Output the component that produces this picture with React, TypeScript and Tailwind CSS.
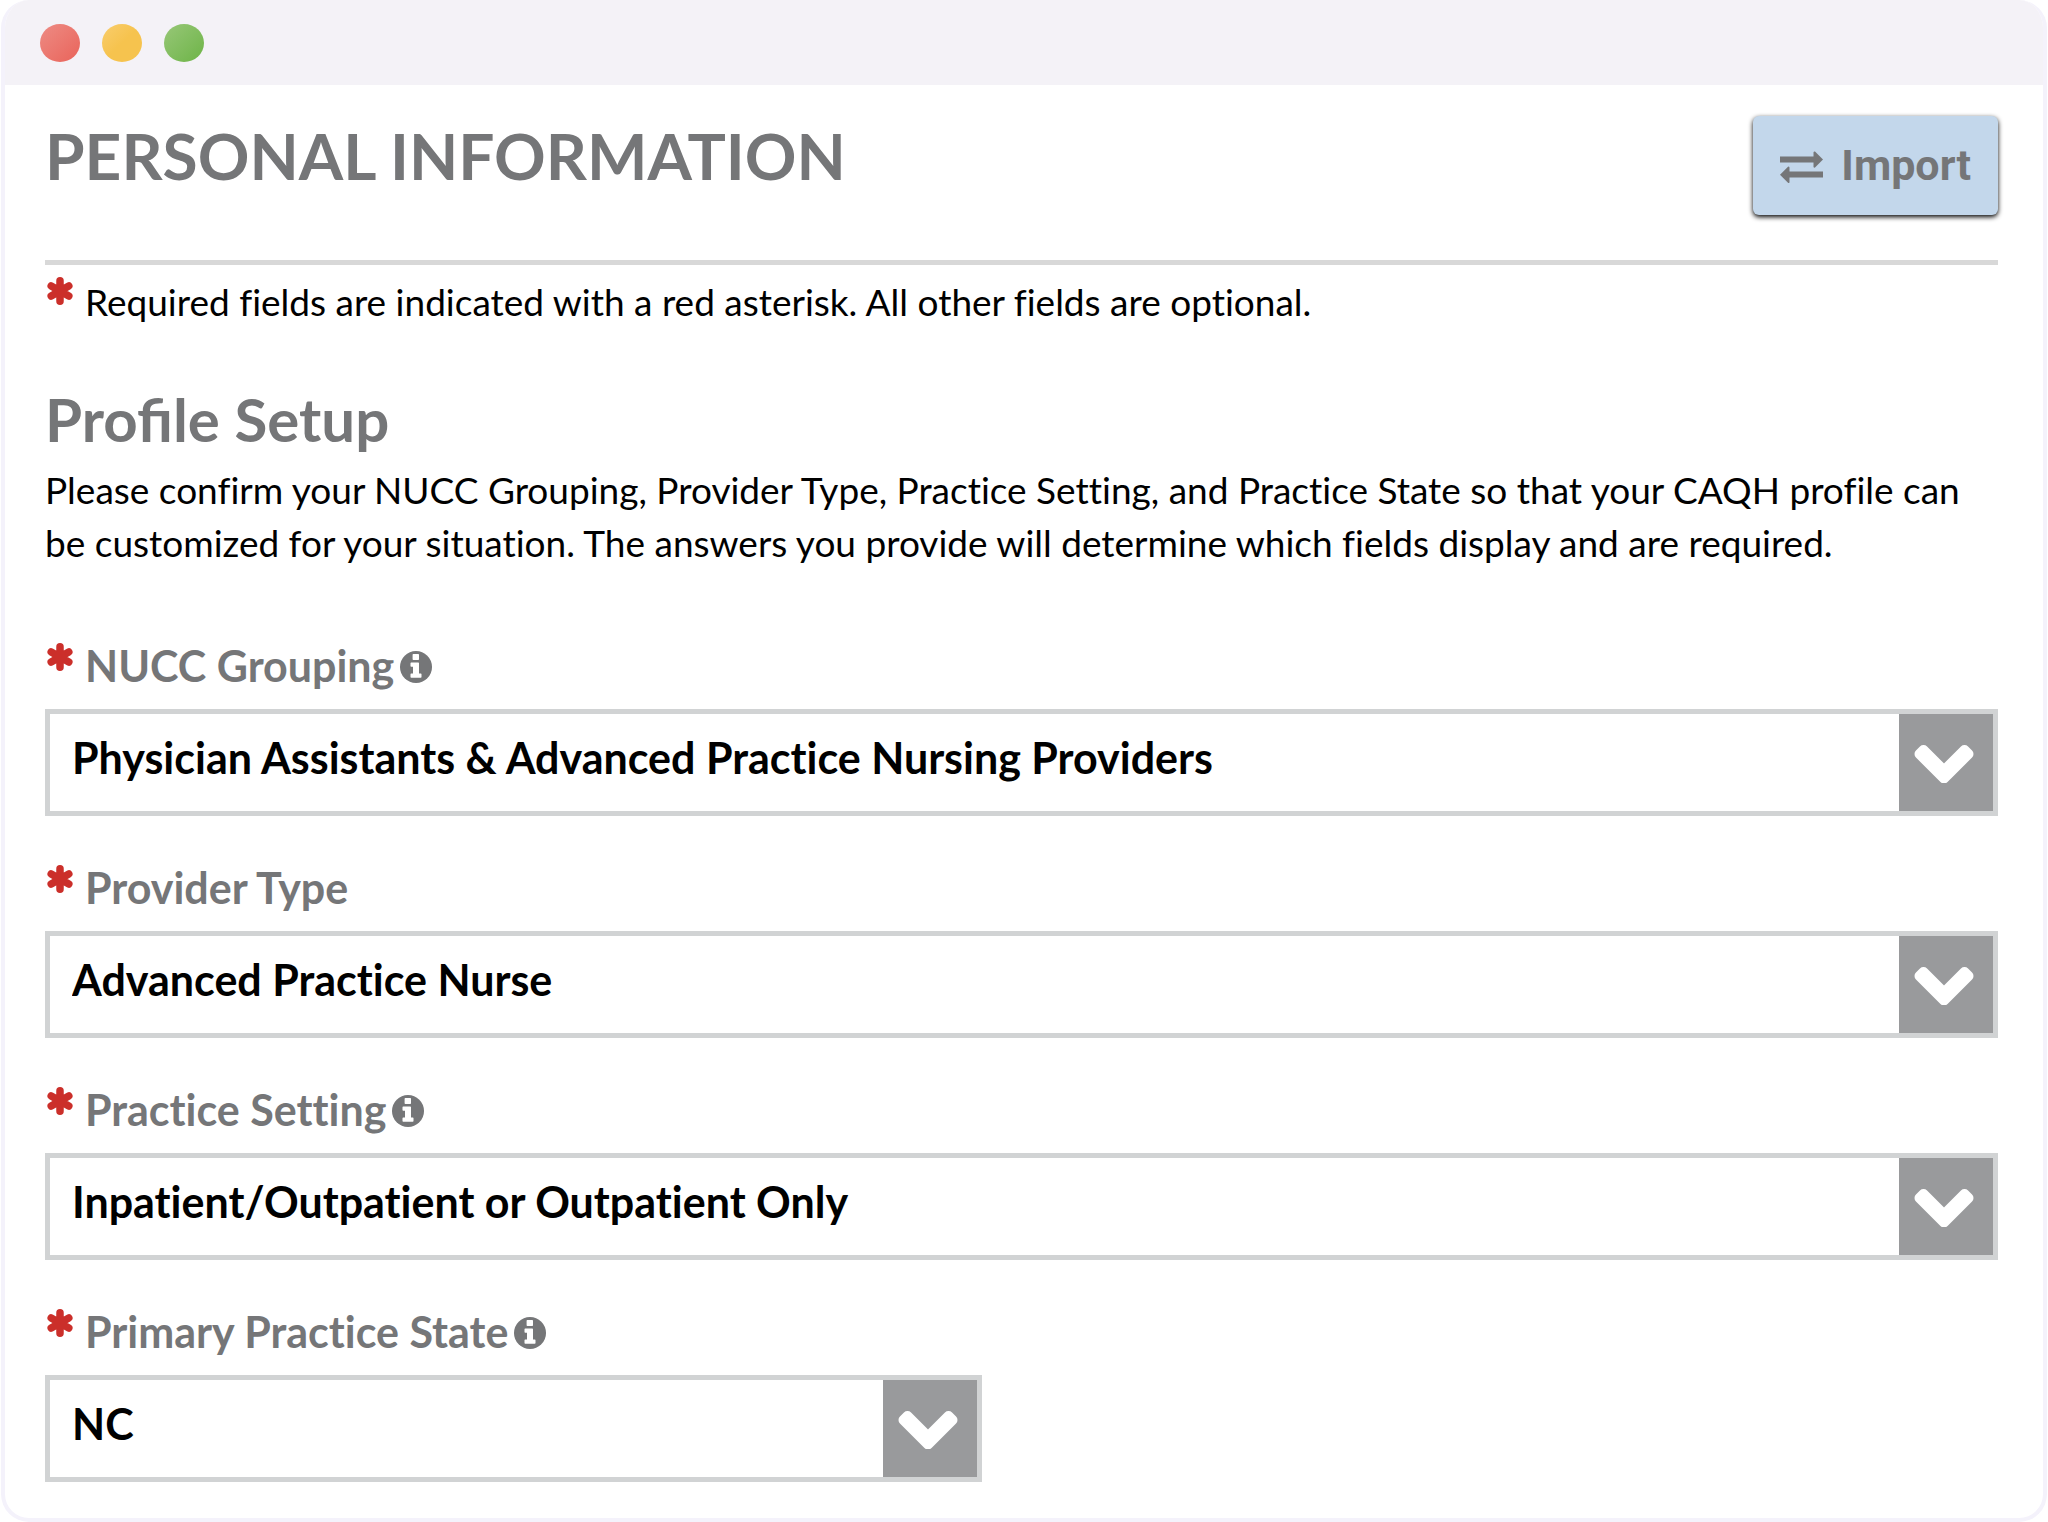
import { useState } from "react";

type Field = {
  id: string;
  label: string;
  info?: boolean;
  half?: boolean;
  options: string[];
};

const fields: Field[] = [
  {
    id: "nucc-grouping",
    label: "NUCC Grouping",
    info: true,
    options: ["Physician Assistants & Advanced Practice Nursing Providers"],
  },
  {
    id: "provider-type",
    label: "Provider Type",
    options: ["Advanced Practice Nurse"],
  },
  {
    id: "practice-setting",
    label: "Practice Setting",
    info: true,
    options: ["Inpatient/Outpatient or Outpatient Only"],
  },
  {
    id: "practice-state",
    label: "Primary Practice State",
    info: true,
    half: true,
    options: ["NC"],
  },
];

function Asterisk() {
  return (
    <svg viewBox="0 0 26 28" className="ml-0.5 h-7 w-[26px] shrink-0" fill="none" stroke="#cb2f2a" strokeWidth="7.5" strokeLinecap="round" aria-hidden="true">
      <path d="M13 3.8v20.4M4.200 8.900l17.600 10.200M21.800 8.900L4.200 19.100" />
    </svg>
  );
}

function InfoIcon() {
  return (
    <svg viewBox="0 -2 32 34" className="h-[34px] w-8" aria-hidden="true">
      <circle cx="16" cy="16" r="16" fill="currentColor" />
      <path
        d="M13.300 3h5q.7 0 .7.7v4.600q0 .7-.7.7h-5q-.7 0-.7-.7V3.700q0-.7.7-.7zM11.200 11.500h7.100q.7 0 .7.7V22.500h1.800q.7 0 .7.7v2.800q0 .7-.7.7h-9.600q-.7 0-.7-.7v-2.800q0-.7.7-.7H13V15.700h-1.800q-.7 0-.7-.7v-2.800q0-.7.7-.7z"
        fill="white"
      />
    </svg>
  );
}

function ExchangeIcon() {
  return (
    <svg viewBox="0 -4 43 37" className="h-[37px] w-[43px]" fill="currentColor" aria-hidden="true">
      <path d="M0 5.5h33.5V1.2Q34 0 35 .6L43 8.6L35 16.6Q34 17 33.5 16V11.5H0z" />
      <path d="M43 20.5H9.500V16.400Q9 15.200 8 15.800L0 23.800L8 31.800Q9 32.500 9.500 31.200V26.500H43z" />
    </svg>
  );
}

function ChevronIcon() {
  return (
    <svg viewBox="0 -1 60 40" className="h-10 w-[60px]" fill="white" stroke="white" strokeWidth="10" strokeLinejoin="round" aria-hidden="true">
      <path d="M9.500 6L30 26.500L50.500 6L54.500 10L30 34.500L5.500 10z" />
    </svg>
  );
}

function SelectField({ field }: { field: Field }) {
  const [value, setValue] = useState(field.options[0]);

  return (
    <div className={field.half ? "w-[48%]" : "w-full"}>
      <div className="flex h-[66px] items-start gap-3">
        <Asterisk />
        <div className="flex items-center gap-1.5 text-[#757678]">
          <label htmlFor={field.id} className="text-[43px] leading-[46px] font-bold">
            {field.label}
          </label>
          {field.info && <InfoIcon />}
        </div>
      </div>
      <div className="relative">
        <select
          id={field.id}
          value={value}
          onChange={(e) => setValue(e.target.value)}
          className="block h-[107px] w-full appearance-none rounded-none border-[5px] border-[#d1d3d4] bg-white pr-28 pb-2 pl-[22px] text-[43px] font-bold text-black [font-variant-ligatures:none]"
        >
          {field.options.map((option) => (
            <option key={option}>{option}</option>
          ))}
        </select>
        {/* Arrow box over the right end of the select */}
        <span className="pointer-events-none absolute inset-y-[5px] right-[5px] flex w-[94px] items-center justify-center bg-[#999a9c] pr-1">
          <ChevronIcon />
        </span>
      </div>
    </div>
  );
}

export default function App() {
  return (
    <div className="min-h-screen bg-white px-px font-['Lato',sans-serif] text-black [font-variant-ligatures:none]">
      <div className="min-h-screen overflow-hidden rounded-[28px] border-4 border-t-0 border-[#f4f2fb] bg-white">
        {/* Title bar */}
        <div className="flex h-[85px] items-center gap-[22px] bg-[#f4f2f7] pl-[35px]">
          <span className="h-[38px] w-10 rounded-[50%] bg-linear-to-br from-[#ed8b84] to-[#e9635a]"></span>
          <span className="h-[38px] w-10 rounded-[50%] bg-linear-to-br from-[#f9cd6c] via-[#f6c34e] to-[#f6c34e]"></span>
          <span className="h-[38px] w-10 rounded-[50%] bg-linear-to-br from-[#97c777] to-[#6db446]"></span>
        </div>

        <main className="pt-[31px] pr-[45px] pl-10">
          <header className="flex items-start justify-between border-b-[5px] border-[#d8d8d8] pb-[45px]">
            <h1 className="text-[64px] leading-[80px] font-bold text-[#757678]">PERSONAL INFORMATION</h1>
            <button
              type="button"
              className="flex h-[99px] items-center gap-[18px] rounded-md bg-[#c3d7eb] px-[27px] font-['Roboto',sans-serif] text-[43px] font-bold text-[#757678] shadow-[0_2px_5px_#000]"
            >
              <ExchangeIcon />
              Import
            </button>
          </header>

          <p className="flex items-start gap-3 pt-3">
            <Asterisk />
            <span className="text-[37px] leading-[50px]">
              Required fields are indicated with a red asterisk. All other fields are optional.
            </span>
          </p>

          <section className="pt-[52px]">
            <h2 className="pb-1 text-[60px] leading-[80px] font-bold text-[#757678] [font-variant-ligatures:normal]">Profile Setup</h2>
            <p className="text-[37px] leading-[53px]">
              Please confirm your NUCC Grouping, Provider Type, Practice Setting, and Practice State so that your CAQH
              profile can be customized for your situation. The answers you provide will determine which fields display
              and are required.
            </p>
          </section>

          <form className="flex flex-col gap-[49px] pt-[74px]">
            {fields.map((field) => (
              <SelectField key={field.id} field={field} />
            ))}
          </form>
        </main>
      </div>
    </div>
  );
}
